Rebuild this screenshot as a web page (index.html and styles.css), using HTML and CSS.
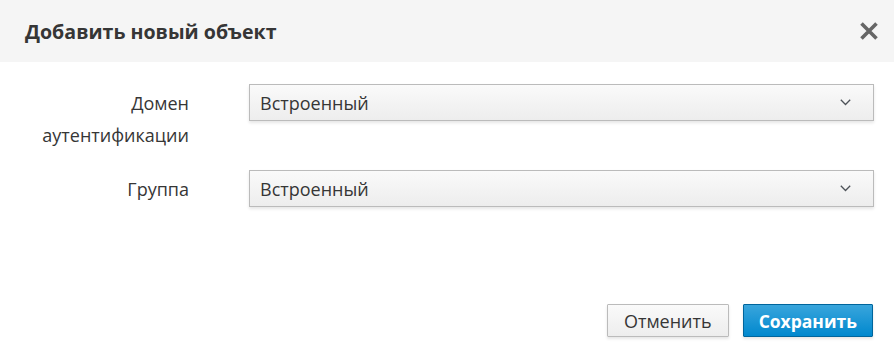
FILE: index.html
```html
<!DOCTYPE html>
<html lang="ru">
<head>
<meta charset="utf-8">
<link rel="stylesheet" href="styles.css">
</head>
<body>
<div class="modal">
  <div class="modal-header">
    <h4 class="modal-title">Добавить новый объект</h4>
    <button class="close" type="button" aria-label="Закрыть">
      <svg width="20" height="20" viewBox="0 0 20 20"><path d="M2.5 2.5 L17.5 17.5 M17.5 2.5 L2.5 17.5" stroke="#666" stroke-width="3.6" stroke-linecap="butt" fill="none"/></svg>
    </button>
  </div>
  <div class="modal-body">
    <div class="form-row">
      <label class="form-label">Домен<br>аутентификации</label>
      <div class="select">
        <span>Встроенный</span>
        <svg class="caret" width="11" height="7" viewBox="0 0 11 7"><path d="M0.8 0.8 L5.5 5.5 L10.2 0.8" stroke="#4d5258" stroke-width="1.3" fill="none"/></svg>
      </div>
    </div>
    <div class="form-row">
      <label class="form-label">Группа</label>
      <div class="select">
        <span>Встроенный</span>
        <svg class="caret" width="11" height="7" viewBox="0 0 11 7"><path d="M0.8 0.8 L5.5 5.5 L10.2 0.8" stroke="#4d5258" stroke-width="1.3" fill="none"/></svg>
      </div>
    </div>
  </div>
  <div class="modal-footer">
    <button class="btn btn-default" type="button">Отменить</button>
    <button class="btn btn-primary" type="button">Сохранить</button>
  </div>
</div>
</body>
</html>
```
FILE: styles.css
```css
html, body {
  margin: 0;
  padding: 0;
  background: #fff;
}
body {
  font-family: "Open Sans", "Noto Sans", sans-serif;
  color: #363636;
  font-size: 18px;
}
.modal {
  width: 894px;
  height: 357px;
  display: flex;
  flex-direction: column;
}
.modal-header {
  height: 62px;
  box-sizing: border-box;
  background: #f5f5f5;
  display: flex;
  align-items: center;
  justify-content: space-between;
  padding: 0 15px 0 25px;
}
.modal-title {
  margin: 0;
  font-size: 19.6px;
  font-weight: 700;
  color: #363636;
}
.close {
  border: 0;
  background: transparent;
  padding: 0;
  width: 20px;
  height: 20px;
  display: flex;
  cursor: pointer;
}
.modal-body {
  padding: 22px 20px 0 0;
  display: flex;
  flex-direction: column;
  gap: 19px;
  flex: 1;
}
.form-row {
  display: grid;
  grid-template-columns: 189px 1fr;
  column-gap: 60px;
  align-items: start;
}
.form-label {
  text-align: right;
  line-height: 32px;
  padding-top: 3px;
}
.select {
  height: 37px;
  box-sizing: border-box;
  border: 1px solid #bbb;
  background: linear-gradient(to bottom, #fafafa 0%, #ededed 100%);
  box-shadow: 0 2px 3px rgba(3, 3, 3, 0.1);
  display: flex;
  align-items: center;
  justify-content: space-between;
  padding: 0 22px 0 10px;
}
.modal-footer {
  display: flex;
  justify-content: flex-end;
  gap: 14px;
  padding: 0 21px 20px 0;
}
.btn {
  height: 33px;
  box-sizing: border-box;
  padding: 0 16px;
  font-family: "Open Sans", "Noto Sans", sans-serif;
  font-size: 18px;
  border-radius: 1px;
  box-shadow: 0 2px 3px rgba(3, 3, 3, 0.1);
  cursor: pointer;
}
.btn-default {
  border: 1px solid #bbb;
  background: linear-gradient(to bottom, #fafafa 0%, #ededed 100%);
  color: #363636;
}
.btn-primary {
  border: 1px solid #00659c;
  background: linear-gradient(to bottom, #39a5dc 0%, #0088ce 100%);
  color: #fff;
  font-weight: 700;
  font-size: 17.5px;
  padding: 0 15px;
}
```
